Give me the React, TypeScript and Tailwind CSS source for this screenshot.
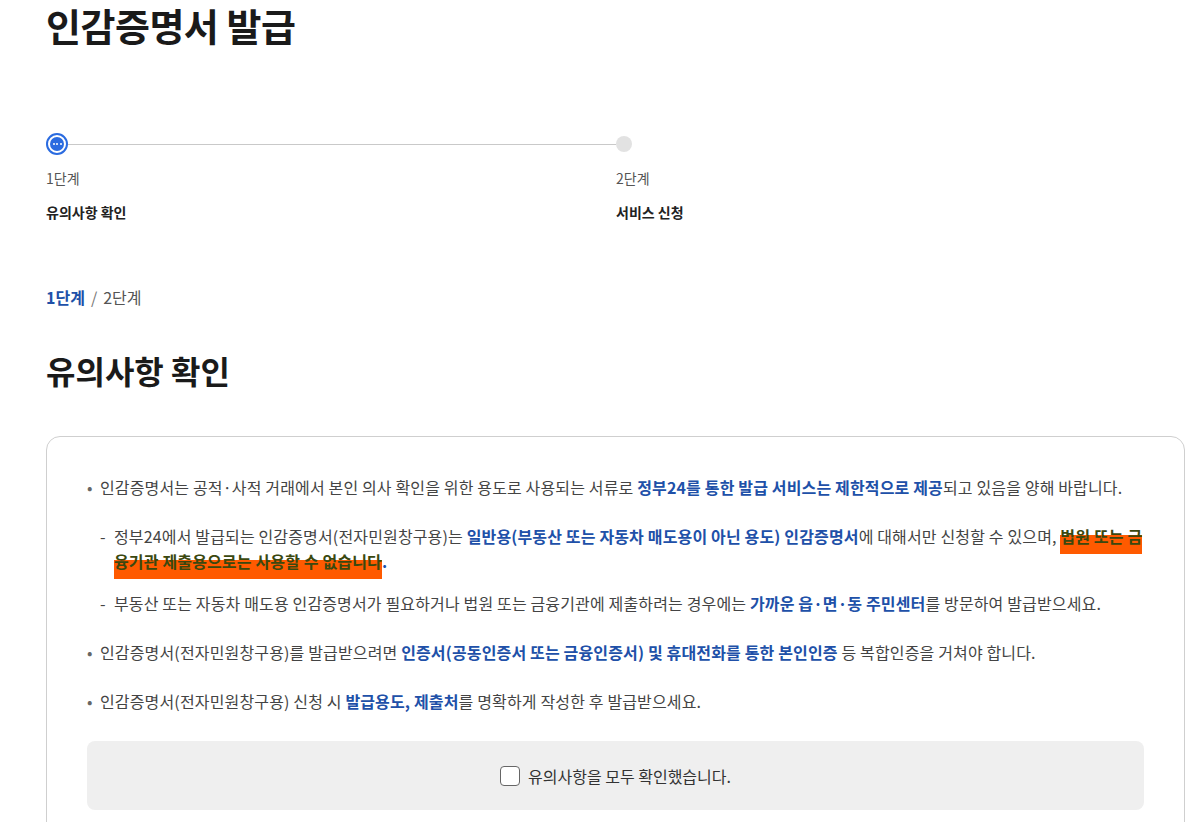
import { useState } from "react";

const font = { fontFamily: '"Noto Sans CJK KR", "Noto Sans", sans-serif' };

function Mark({ children }: { children: React.ReactNode }) {
  return (
    <span className="box-decoration-clone pb-[6px] text-[#3a480f] bg-[linear-gradient(to_bottom,transparent_38%,#ff5a00_38%,#ff5a00_100%)]">
      {children}
    </span>
  );
}

function B({ children }: { children: React.ReactNode }) {
  return <strong className="font-bold text-[#2050a8]">{children}</strong>;
}

export default function App() {
  const [checked, setChecked] = useState(false);

  return (
    <div className="min-h-screen bg-white text-[#222] pl-[46px] pr-[12px]" style={font}>
      <h1 className="text-[38px] leading-[50px] font-bold text-[#1a1a1a] tracking-[-0.5px]">인감증명서 발급</h1>

      {/* stepper */}
      <div className="mt-[83px] grid grid-cols-[570px_200px]">
        <div>
          <div className="flex items-center h-[22px]">
            <div className="w-[22px] h-[22px] rounded-full border-2 border-[#2a6be0] bg-white flex items-center justify-center shrink-0">
              <div className="w-[14px] h-[14px] rounded-full bg-[#2a6be0] flex items-center justify-center gap-[1.5px]">
                <span className="w-[2px] h-[2px] rounded-full bg-white" />
                <span className="w-[2px] h-[2px] rounded-full bg-white" />
                <span className="w-[2px] h-[2px] rounded-full bg-white" />
              </div>
            </div>
            <div className="flex-1 h-px bg-[#c9c9c9]" />
          </div>
          <p className="mt-[13px] text-[14px] leading-[20px] text-[#555]">1단계</p>
          <p className="mt-[14px] text-[14px] leading-[20px] font-bold text-[#222]">유의사항 확인</p>
        </div>
        <div>
          <div className="flex items-center h-[22px]">
            <div className="w-[16px] h-[16px] rounded-full bg-[#e2e2e2]" />
          </div>
          <p className="mt-[13px] text-[14px] leading-[20px] text-[#555]">2단계</p>
          <p className="mt-[14px] text-[14px] leading-[20px] font-bold text-[#222]">서비스 신청</p>
        </div>
      </div>

      {/* breadcrumb */}
      <p className="mt-[64px] text-[16px] leading-[22px] text-[#555]">
        <span className="font-bold text-[#2050a8]">1단계</span>
        <span className="mx-[6px] text-[#777]">/</span>
        2단계
      </p>

      <h2 className="mt-[40px] text-[32px] leading-[44px] font-bold text-[#1a1a1a]">유의사항 확인</h2>

      {/* notice box */}
      <div className="mt-[44px] border border-[#cfcfcf] rounded-[14px] px-[40px] pt-[38px] pb-[40px]">
        <ul className="flex flex-col gap-[24px] text-[16px] leading-[25px] tracking-[0.15px] break-all text-[#444]">
          <li className="flex">
            <span className="w-[13px] shrink-0 text-[#666]">•</span>
            <div>
              <p>
                인감증명서는 공적·사적 거래에서 본인 의사 확인을 위한 용도로 사용되는 서류로{" "}
                <B>정부24를 통한 발급 서비스는 제한적으로 제공</B>되고 있음을 양해 바랍니다.
              </p>
              <ul className="mt-[24px] flex flex-col gap-[17px]">
                <li className="flex">
                  <span className="w-[14px] shrink-0">-</span>
                  <p>
                    정부24에서 발급되는 인감증명서(전자민원창구용)는{" "}
                    <B>일반용(부동산 또는 자동차 매도용이 아닌 용도) 인감증명서</B>에 대해서만 신청할 수 있으며,{" "}
                    <strong className="font-bold">
                      <Mark>법원 또는 금융기관 제출용으로는 사용할 수 없습니다</Mark>
                      <span className="text-[#2050a8]">.</span>
                    </strong>
                  </p>
                </li>
                <li className="flex">
                  <span className="w-[14px] shrink-0">-</span>
                  <p>
                    부동산 또는 자동차 매도용 인감증명서가 필요하거나 법원 또는 금융기관에 제출하려는 경우에는{" "}
                    <B>가까운 읍·면·동 주민센터</B>를 방문하여 발급받으세요.
                  </p>
                </li>
              </ul>
            </div>
          </li>
          <li className="flex">
            <span className="w-[13px] shrink-0 text-[#666]">•</span>
            <p>
              인감증명서(전자민원창구용)를 발급받으려면{" "}
              <B>인증서(공동인증서 또는 금융인증서) 및 휴대전화를 통한 본인인증</B> 등 복합인증을 거쳐야 합니다.
            </p>
          </li>
          <li className="flex">
            <span className="w-[13px] shrink-0 text-[#666]">•</span>
            <p>
              인감증명서(전자민원창구용) 신청 시 <B>발급용도, 제출처</B>를 명확하게 작성한 후 발급받으세요.
            </p>
          </li>
        </ul>

        <div className="mt-[27px] h-[69px] rounded-[8px] bg-[#efefef] flex items-center justify-center">
          <label className="flex items-center gap-[8px] cursor-pointer text-[16px] text-[#333]">
            <span
              onClick={() => setChecked(!checked)}
              className={`w-[20px] h-[20px] rounded-[4px] border border-[#666] flex items-center justify-center ${checked ? "bg-[#2050a8]" : "bg-white"}`}
            >
              {checked && (
                <svg viewBox="0 0 12 12" className="w-3 h-3" fill="none" stroke="white" strokeWidth="2">
                  <path d="M2 6l3 3 5-6" />
                </svg>
              )}
            </span>
            유의사항을 모두 확인했습니다.
          </label>
        </div>
      </div>
    </div>
  );
}
